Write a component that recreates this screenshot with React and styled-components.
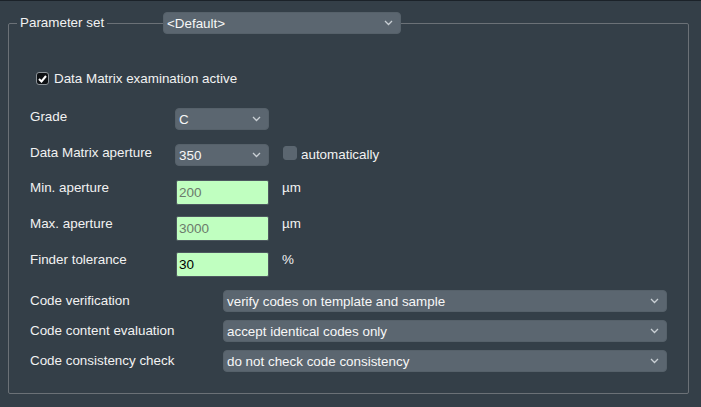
import React from "react";
import styled, { createGlobalStyle } from "styled-components";

const GlobalStyle = createGlobalStyle`
  html, body {
    margin: 0;
    background: #343f48;
  }
  body {
    font-family: "Liberation Sans", Arial, sans-serif;
    font-size: 13.4px;
    color: #f2f2f2;
  }
`;

const Page = styled.div`
  width: 701px;
  height: 407px;
  box-sizing: border-box;
  border-top: 1px solid #1b2229;
  padding: 11px 12px 0 8px;
`;

const Group = styled.fieldset`
  margin: 0;
  padding: 0;
  border: 1px solid #6b7177;
  border-radius: 2px;
  min-width: 0;
`;

const Legend = styled.legend`
  display: flex;
  align-items: center;
  width: 384px;
  margin-left: 8px;
  padding: 0;
`;

const LegendText = styled.span`
  padding: 0 3px;
  line-height: 22px;
`;

const LegendLine = styled.span`
  flex: 1;
  height: 1px;
  background: #6b7177;
`;

const Content = styled.div`
  padding: 38px 21px 21px 21px;
`;

const ComboBox = styled.div`
  display: flex;
  align-items: center;
  justify-content: space-between;
  box-sizing: border-box;
  width: ${(p) => p.$width || "100%"};
  height: 22px;
  padding: 0 7px 0 3px;
  background: #5b6670;
  border: 1px solid #56616a;
  border-radius: 4px;
  color: #f7f7f7;
  white-space: nowrap;
`;

const Chevron = () => (
  <svg width="9" height="6" viewBox="0 0 9 6">
    <polyline
      points="1,1 4.5,4.5 8,1"
      fill="none"
      stroke="#c9cfd4"
      strokeWidth="1.3"
    />
  </svg>
);

const Combo = ({ value, width }) => (
  <ComboBox $width={width}>
    <span>{value}</span>
    <Chevron />
  </ComboBox>
);

const CheckRow = styled.label`
  display: flex;
  align-items: flex-start;
  gap: 5px;
  height: 36px;
  margin-left: 6px;
`;

const Box = styled.span`
  display: flex;
  align-items: center;
  justify-content: center;
  box-sizing: border-box;
  width: ${(p) => (p.$checked ? "13px" : "14px")};
  height: ${(p) => (p.$checked ? "13px" : "14px")};
  margin-top: ${(p) => p.$top || "0"};
  border-radius: 3px;
  background: ${(p) => (p.$checked ? "#0e1114" : "#5b6670")};
  border: 1px solid ${(p) => (p.$checked ? "#8d949a" : "#5b6670")};
`;

const Tick = () => (
  <svg width="9" height="8" viewBox="0 0 9 8">
    <polyline
      points="1,4 3.5,6.5 8,1"
      fill="none"
      stroke="#ffffff"
      strokeWidth="2"
    />
  </svg>
);

const CheckText = styled.span`
  line-height: 14px;
`;

const Form = styled.div`
  display: grid;
  grid-template-columns: 145px 94px auto;
  grid-auto-rows: 36px;
  align-items: start;
`;

const Label = styled.span`
  line-height: 16px;
  padding-top: ${(p) => p.$top || "0"};
`;

const Field = styled.div`
  box-sizing: border-box;
  width: 93px;
  height: 25px;
  margin-left: 1px;
  padding: 0 2px;
  background: #c0ffc0;
  border: 1px solid #4d585f;
  border-radius: 2px;
  line-height: 23px;
  font-size: 13.5px;
  color: ${(p) => (p.$disabled ? "#6c7b6c" : "#000000")};
`;

const Aside = styled.div`
  display: flex;
  align-items: flex-start;
  gap: 4px;
  margin-left: 14px;
  line-height: 16px;
`;

const AsideText = styled.span`
  padding-top: 3px;
`;

const Unit = styled.span`
  margin-left: 13px;
  line-height: 16px;
`;

const List = styled.div`
  display: grid;
  grid-template-columns: 193px 1fr;
  row-gap: 8px;
  align-items: center;
  margin-top: 2px;
`;

const inputs = [
  { label: "Min. aperture", value: "200", unit: "µm", disabled: true },
  { label: "Max. aperture", value: "3000", unit: "µm", disabled: true },
  { label: "Finder tolerance", value: "30", unit: "%", disabled: false },
];

const codes = [
  ["Code verification", "verify codes on template and sample"],
  ["Code content evaluation", "accept identical codes only"],
  ["Code consistency check", "do not check code consistency"],
];

export default function App() {
  return (
    <>
      <GlobalStyle />
      <Page>
        <Group>
          <Legend>
            <LegendText>Parameter set</LegendText>
            <LegendLine />
            <Combo value="<Default>" width="238px" />
          </Legend>

          <Content>
            <CheckRow>
              <Box $checked>
                <Tick />
              </Box>
              <CheckText>Data Matrix examination active</CheckText>
            </CheckRow>

            <Form>
              <Label $top="1px">Grade</Label>
              <Combo value="C" width="94px" />
              <span />

              <Label $top="1px">Data Matrix aperture</Label>
              <Combo value="350" width="94px" />
              <Aside>
                <Box $top="2px" />
                <AsideText>automatically</AsideText>
              </Aside>

              {inputs.map((row) => (
                <React.Fragment key={row.label}>
                  <Label>{row.label}</Label>
                  <Field $disabled={row.disabled}>{row.value}</Field>
                  <Unit>{row.unit}</Unit>
                </React.Fragment>
              ))}
            </Form>

            <List>
              {codes.map(([label, value]) => (
                <React.Fragment key={label}>
                  <Label>{label}</Label>
                  <Combo value={value} />
                </React.Fragment>
              ))}
            </List>
          </Content>
        </Group>
      </Page>
    </>
  );
}
